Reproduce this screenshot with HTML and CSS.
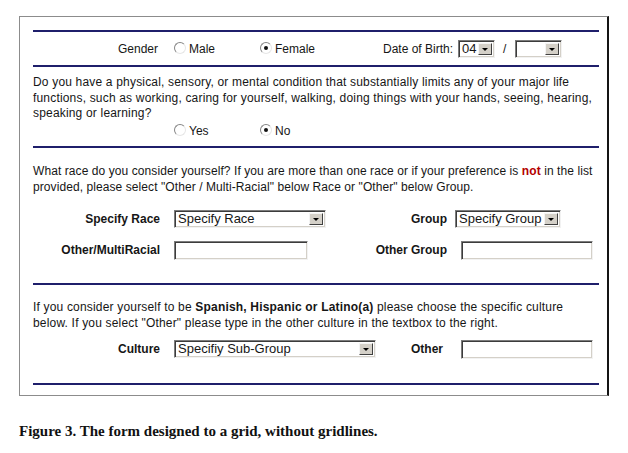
FILE: index.html
```html
<!DOCTYPE html>
<html lang="en">
<head>
<meta charset="utf-8">
<title>Form designed to a grid</title>
<link rel="stylesheet" href="styles.css">
</head>
<body>
<div class="page">
  <div class="frame">
    <div class="rule"></div>
    <div class="row-gender">
      <span class="glabel">Gender</span>
      <span class="choice"><span class="radio"></span>Male</span>
      <span class="choice choice-wide"><span class="radio on"></span>Female</span>
      <span class="dob">Date of Birth:</span>
      <span class="sel sel-month"><span class="sel-text">04</span><span class="sel-btn"><span class="tri"></span></span></span>
      <span class="slash">/</span>
      <span class="sel sel-year"><span class="sel-text"></span><span class="sel-btn"><span class="tri"></span></span></span>
    </div>
    <div class="rule"></div>
    <div class="section s2">
      <p class="para">Do you have a physical, sensory, or mental condition that substantially limits any of your major life<br>functions, such as working, caring for yourself, walking, doing things with your hands, seeing, hearing,<br>speaking or learning?</p>
      <div class="choices">
        <span class="glabel"></span>
        <span class="choice"><span class="radio"></span>Yes</span>
        <span class="choice"><span class="radio on"></span>No</span>
      </div>
    </div>
    <div class="rule"></div>
    <div class="section s3">
      <p class="para para-tight">What race do you consider yourself? If you are more than one race or if your preference is <b class="red">not</b> in the list<br>provided, please select "Other / Multi-Racial" below Race or "Other" below Group.</p>
      <div class="grid">
        <span class="flabel">Specify Race</span>
        <span class="sel sel-race"><span class="sel-text">Specify Race</span><span class="sel-btn"><span class="tri"></span></span></span>
        <span class="flabel">Group</span>
        <span class="sel sel-group"><span class="sel-text">Specify Group</span><span class="sel-btn"><span class="tri"></span></span></span>
        <span class="flabel">Other/MultiRacial</span>
        <span class="txt txt-multi"></span>
        <span class="flabel">Other Group</span>
        <span class="txt txt-other"></span>
      </div>
    </div>
    <div class="rule"></div>
    <div class="section s4">
      <p class="para">If you consider yourself to be <b>Spanish, Hispanic or Latino(a)</b> please choose the specific culture<br>below. If you select "Other" please type in the other culture in the textbox to the right.</p>
      <div class="grid">
        <span class="flabel">Culture</span>
        <span class="sel sel-culture"><span class="sel-text">Specifiy Sub-Group</span><span class="sel-btn"><span class="tri"></span></span></span>
        <span class="flabel flabel-tight">Other</span>
        <span class="txt txt-other"></span>
      </div>
    </div>
    <div class="rule"></div>
  </div>
  <p class="caption">Figure 3. The form designed to a grid, without gridlines.</p>
</div>
</body>
</html>
```

FILE: styles.css
```css
html, body {
  margin: 0;
  padding: 0;
  background: #fff;
}

.page {
  padding: 16px 0 0 19px;
  font-family: "Liberation Sans", Arial, sans-serif;
  font-size: 12px;
  color: #161616;
}

.frame {
  box-sizing: border-box;
  width: 590px;
  border: 1px solid #8c8c8c;
  border-right: 2px solid #141414;
  padding: 13px 8px 10px 13px;
}

.rule {
  height: 2px;
  background: #1f1f6b;
}

.row-gender {
  display: flex;
  align-items: center;
  height: 33px;
}

.glabel {
  width: 125px;
  margin-right: 16px;
  text-align: right;
}

.choice {
  display: inline-flex;
  align-items: center;
  width: 86px;
  line-height: 14px;
}

.choice-wide {
  width: 123px;
}

.radio {
  box-sizing: border-box;
  position: relative;
  width: 12px;
  height: 12px;
  margin: -2px 3px 0 0;
  border-radius: 50%;
  border: 1px solid;
  border-color: #858585 #e6e6e6 #e6e6e6 #858585;
  background: #fff;
}

.radio.on::after {
  content: "";
  position: absolute;
  left: 3px;
  top: 3px;
  width: 4px;
  height: 4px;
  border-radius: 50%;
  background: #111;
}

.dob {
  margin-right: 5px;
}

.slash {
  margin: 0 9px 0 8px;
}

.sel {
  box-sizing: border-box;
  display: inline-flex;
  align-items: stretch;
  height: 18px;
  border: 1px solid;
  border-color: #7c7c7c #f2f2f2 #f2f2f2 #7c7c7c;
  box-shadow: inset 1px 1px 0 #3c3c3c, inset -1px -1px 0 #d4d0c8;
  background: #fff;
  padding: 1px 2px 1px 1px;
  font-size: 13px;
}

.sel-text {
  flex: 1;
  padding-left: 2px;
  line-height: 14px;
  white-space: nowrap;
}

.sel-btn {
  box-sizing: border-box;
  display: flex;
  align-items: center;
  justify-content: center;
  width: 14px;
  margin: 1px 0;
  background: #d4d0c8;
  border: 1px solid;
  border-color: #f4f4f4 #404040 #404040 #f4f4f4;
}

.tri {
  width: 0;
  height: 0;
  border-top: 3px solid #000;
  border-left: 3px solid transparent;
  border-right: 3px solid transparent;
  margin-top: 1px;
}

.sel-month { width: 37px; }
.sel-year { width: 47px; }
.sel-race { width: 152px; }
.sel-group { width: 106px; margin-left: -6px; }
.sel-culture { width: 202px; }

.txt {
  box-sizing: border-box;
  display: block;
  height: 19px;
  border: 1px solid;
  border-color: #7c7c7c #f2f2f2 #f2f2f2 #7c7c7c;
  box-shadow: inset 1px 1px 0 #3c3c3c, inset -1px -1px 0 #d4d0c8;
  background: #fff;
}

.txt-multi { width: 134px; }
.txt-other { width: 132px; }

.section {
  box-sizing: border-box;
}

.para {
  margin: 0;
  line-height: 15.5px;
  letter-spacing: 0.18px;
  white-space: nowrap;
}

.para-tight {
  letter-spacing: 0.08px;
}

.red {
  color: #b40000;
}

.s2 {
  padding: 8px 0 7px;
}

.choices {
  display: flex;
  align-items: center;
  height: 16px;
  margin-top: 1.5px;
}

.s3 {
  padding: 16px 0 23px;
}

.s4 {
  padding: 15px 0 24px;
}

.grid {
  display: grid;
  grid-template-columns: 127px 159px 100px 132px;
  grid-auto-rows: 20px;
  column-gap: 14px;
  row-gap: 11px;
  align-items: center;
}

.s3 .grid {
  margin-top: 14px;
}

.s4 .grid {
  margin-top: 8px;
}

.flabel {
  font-weight: bold;
  text-align: right;
  white-space: nowrap;
}

.flabel-tight {
  padding-right: 4px;
}

.caption {
  margin: 27px 0 0;
  font-family: "Liberation Serif", "Times New Roman", serif;
  font-weight: bold;
  font-size: 15px;
  line-height: 17px;
  color: #111;
}
```
